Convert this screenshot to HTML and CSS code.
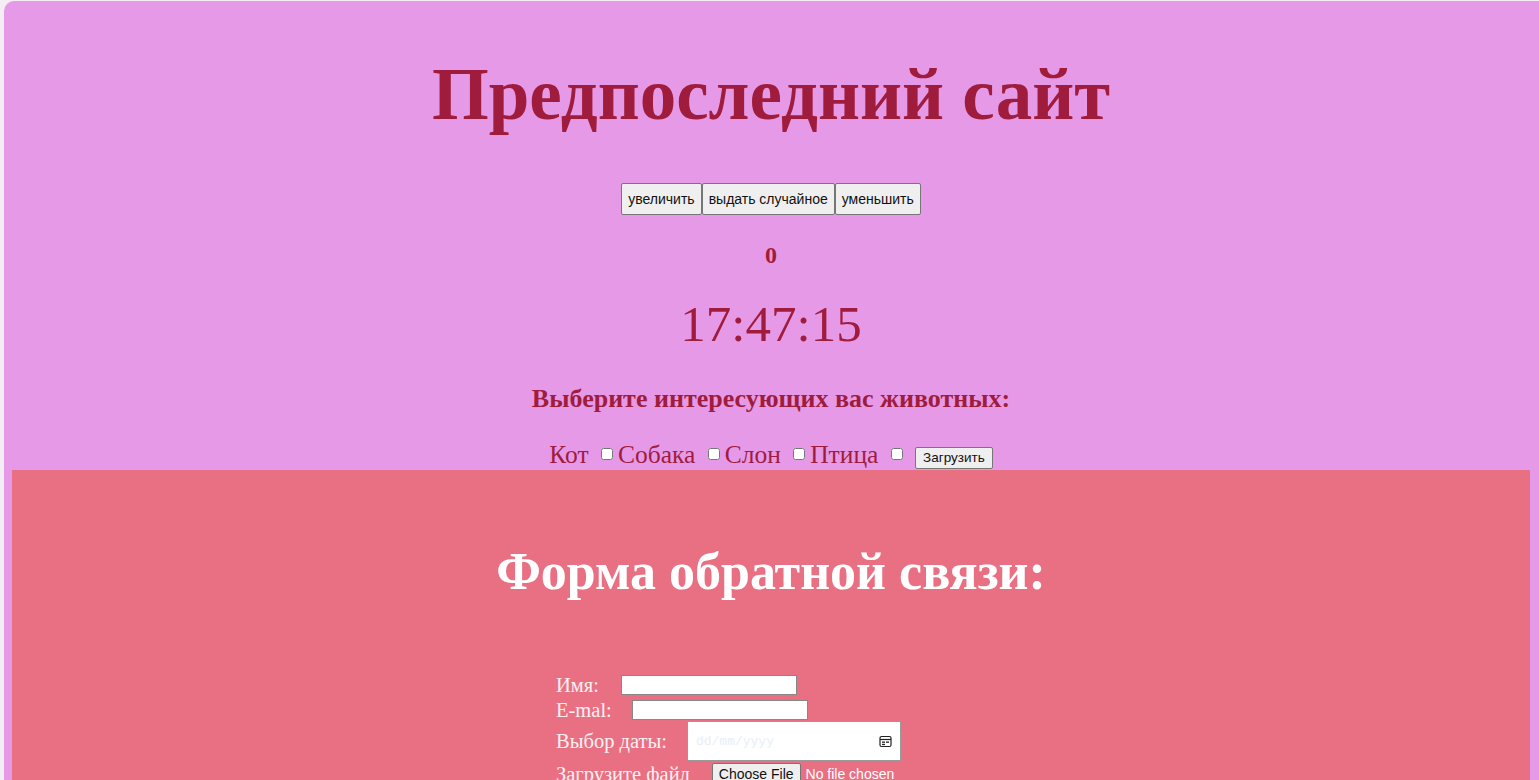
FILE: index.html
```html
<!DOCTYPE html>
<html lang="ru">
<head>
<meta charset="utf-8">
<title>Предпоследний сайт</title>
<link rel="stylesheet" href="styles.css">
</head>
<body>
<div class="page">
  <header class="top">
    <h1 class="title">Предпоследний сайт</h1>
    <div class="counter-buttons">
      <button class="btn">увеличить</button><button class="btn">выдать случайное</button><button class="btn">уменьшить</button>
    </div>
    <p class="count">0</p>
    <p class="clock">17:47:15</p>
    <h3 class="animals-title">Выберите интересующих вас животных:</h3>
    <div class="animals">
      <label class="animal">Кот <input type="checkbox" class="cb"></label><label class="animal">Собака <input type="checkbox" class="cb"></label><label class="animal">Слон <input type="checkbox" class="cb"></label><label class="animal">Птица <input type="checkbox" class="cb"></label>
      <button class="btn-small">Загрузить</button>
    </div>
  </header>
  <section class="feedback">
    <h2 class="feedback-title">Форма обратной связи:</h2>
    <form class="form">
      <div class="row"><label class="lbl">Имя:</label><input type="text" class="txt txt-name"></div>
      <div class="row row-mail"><label class="lbl">E-mal:</label><input type="text" class="txt txt-mail"></div>
      <div class="row row-date"><label class="lbl">Выбор даты:</label><div class="date-field"><span class="date-ph">dd/mm/yyyy</span><svg class="cal" width="13" height="13" viewBox="0 0 13 13"><rect x="1" y="1.5" width="11" height="10" rx="1.5" fill="none" stroke="#222" stroke-width="1.2"/><line x1="1" y1="4.5" x2="12" y2="4.5" stroke="#222" stroke-width="1.2"/><rect x="3" y="6.5" width="3" height="1.3" fill="#222"/><rect x="7" y="6.5" width="3" height="1.3" fill="#222"/><rect x="3" y="8.8" width="3" height="1.3" fill="#222"/></svg></div></div>
      <div class="row row-file"><label class="lbl">Загрузите файл</label><button type="button" class="file-btn">Choose File</button><span class="file-none">No file chosen</span></div>
    </form>
  </section>
</div>
</body>
</html>
```

FILE: styles.css
```css
html, body {
  margin: 0;
  padding: 0;
  height: 100%;
  overflow: hidden;
}
body {
  background: #f4eef4;
  font-family: "Liberation Serif", "Times New Roman", serif;
}
.page {
  margin: 1px 0 0 4px;
  background: #e699e7;
  border-top-left-radius: 10px;
  padding: 0 9px 0 8px;
  min-height: 100%;
}
.top {
  text-align: center;
  color: #a01c3c;
  padding-top: 1px;
}
.title {
  margin: 48px 0 0;
  font-size: 73px;
  line-height: 90px;
  font-weight: bold;
}
.counter-buttons {
  margin-top: 43px;
  display: flex;
  justify-content: center;
}
.btn {
  font-family: "Liberation Sans", Arial, sans-serif;
  font-size: 14px;
  height: 32px;
  padding: 0 6px;
  background: #efefef;
  color: #111;
  border: 1px solid #767676;
  border-radius: 2px;
  margin: 0;
}
.count {
  margin: 26px 0 0;
  font-size: 24px;
  font-weight: bold;
  line-height: 28px;
}
.clock {
  margin: 25px 0 0;
  font-size: 51px;
  line-height: 60px;
}
.animals-title {
  margin: 30px 0 0;
  font-size: 26px;
  line-height: 30px;
  font-weight: bold;
}
.animals {
  margin-top: 25px;
  font-size: 25.5px;
  line-height: 31px;
  height: 31px;
}
.animal {
  display: inline;
}
.cb {
  width: 12px;
  height: 12px;
  margin: 0 5px 0 6px;
  vertical-align: 3px;
}
.btn-small {
  font-family: "Liberation Sans", Arial, sans-serif;
  font-size: 13.5px;
  height: 22px;
  padding: 0 7px;
  background: #efefef;
  color: #111;
  border: 1px solid #767676;
  border-radius: 2px;
  margin-left: 1px;
  vertical-align: 1px;
}
.feedback {
  background: #e97083;
  padding-top: 72px;
  height: 400px;
}
.feedback-title {
  margin: 0;
  text-align: center;
  color: #fff;
  font-size: 52px;
  line-height: 60px;
  font-weight: bold;
}
.form {
  margin: 72px 0 0 544px;
  color: #fdf0f2;
  font-size: 20.5px;
}
.row {
  display: flex;
  align-items: center;
}
.lbl {
  line-height: 22px;
}
.txt {
  height: 20px;
  box-sizing: border-box;
  border: 1px solid #888;
  background: #fff;
  padding: 0;
  flex-shrink: 0;
}
.txt-name { width: 176px; margin-left: 22px; }
.txt-mail { width: 176px; margin-left: 20px; }
.row-mail { margin-top: 3px; }
.row-date { margin-top: 0; }
.date-field {
  flex-shrink: 0;
  margin-left: 20px;
  width: 214px;
  height: 40px;
  box-sizing: border-box;
  background: #fff;
  border: 1px solid #999;
  display: flex;
  align-items: center;
  justify-content: space-between;
  padding: 0 8px 0 8px;
}
.date-ph {
  font-family: "Liberation Mono", "Courier New", monospace;
  font-size: 13px;
  color: #e8eef9;
}
.cal { display: block; }
.row-file { margin-top: 2px; }
.file-btn {
  margin-left: 22px;
  font-family: "Liberation Sans", Arial, sans-serif;
  font-size: 14px;
  height: 22px;
  padding: 0 6px;
  background: #efefef;
  color: #111;
  border: 1px solid #767676;
  border-radius: 2px;
}
.file-none {
  margin-left: 5px;
  font-family: "Liberation Sans", Arial, sans-serif;
  font-size: 14px;
  color: #fff;
}
```
